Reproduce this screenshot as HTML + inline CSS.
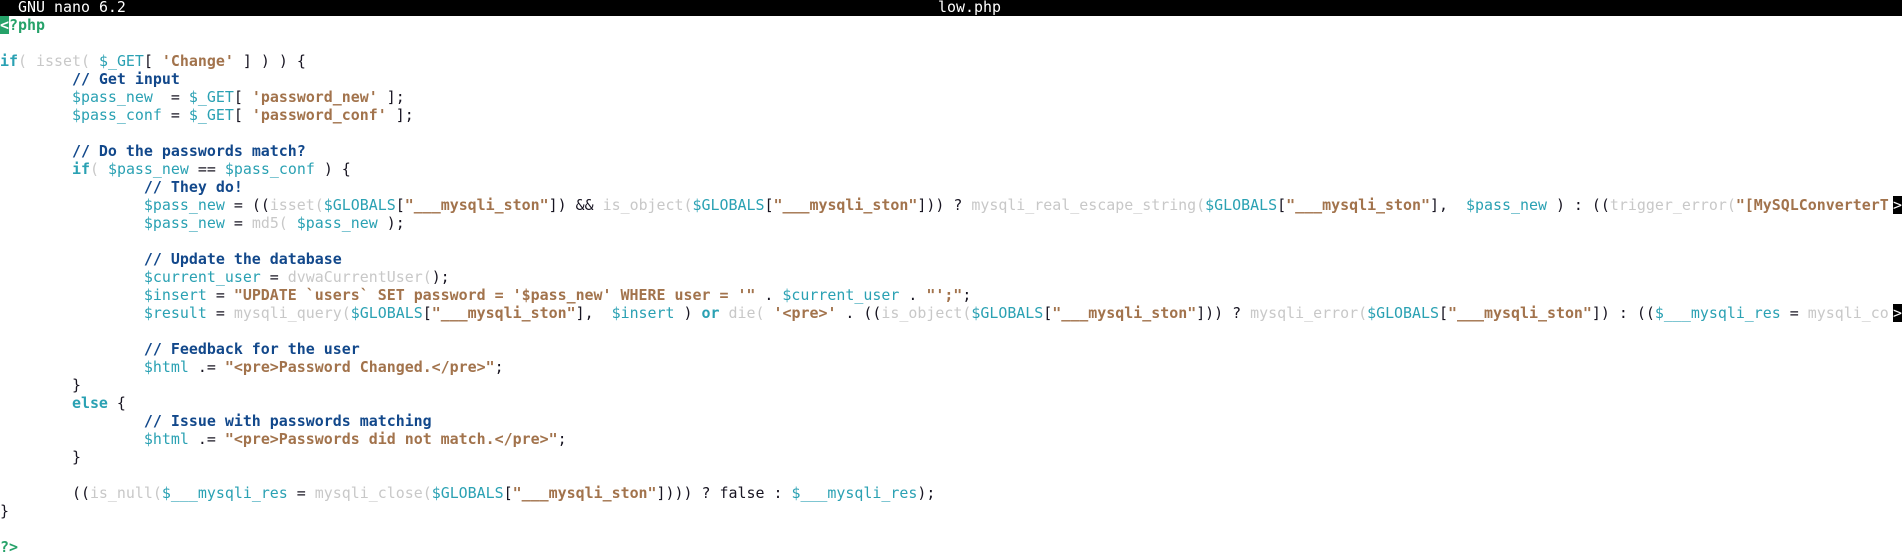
<!DOCTYPE html>
<html><head><meta charset="utf-8"><style>
html,body{margin:0;padding:0;background:#fff;width:1902px;height:557px;overflow:hidden}
body{font-family:"DejaVu Sans Mono","Liberation Mono",monospace;font-size:14.94px;color:#171421}
#bar{position:absolute;left:0;top:0;width:1902px;height:16px;background:#000;color:#fff;white-space:pre;line-height:14px}
#ed{position:absolute;left:0;top:16px;width:1902px}
.l{height:18px;line-height:18px;white-space:pre;overflow:hidden;position:relative}
.k{color:#2aa1b3;font-weight:bold}
.v{color:#2aa1b3}
.f{color:#c8c8c8}
.s{color:#a2734c;font-weight:bold}
.c{color:#12488b;font-weight:bold}
.g{color:#26a269;font-weight:bold}
.gb{background:#26a269;color:#fff;font-weight:bold}
.m{position:absolute;left:1893px;top:0;background:#000;color:#fff;height:18px;width:9px}
</style></head><body>
<div id="bar"><span style="position:absolute;left:18px">GNU nano 6.2</span><span style="position:absolute;left:938px">low.php</span></div>
<div id="ed">
<div class="l"><span class="gb">&lt;</span><span class="g">?php</span></div>
<div class="l"></div>
<div class="l"><span class="k">if</span><span class="f">( isset( </span><span class="v">$_GET</span>[ <span class="s">'Change'</span> ] ) ) {</div>
<div class="l">        <span class="c">// Get input</span></div>
<div class="l">        <span class="v">$pass_new</span>  = <span class="v">$_GET</span>[ <span class="s">'password_new'</span> ];</div>
<div class="l">        <span class="v">$pass_conf</span> = <span class="v">$_GET</span>[ <span class="s">'password_conf'</span> ];</div>
<div class="l"></div>
<div class="l">        <span class="c">// Do the passwords match?</span></div>
<div class="l">        <span class="k">if</span><span class="f">( </span><span class="v">$pass_new</span> == <span class="v">$pass_conf</span> ) {</div>
<div class="l">                <span class="c">// They do!</span></div>
<div class="l">                <span class="v">$pass_new</span> = ((<span class="f">isset(</span><span class="v">$GLOBALS</span>[<span class="s">"___mysqli_ston"</span>]) &amp;&amp; <span class="f">is_object(</span><span class="v">$GLOBALS</span>[<span class="s">"___mysqli_ston"</span>])) ? <span class="f">mysqli_real_escape_string(</span><span class="v">$GLOBALS</span>[<span class="s">"___mysqli_ston"</span>],  <span class="v">$pass_new</span> ) : ((<span class="f">trigger_error(</span><span class="s">"[MySQLConverterT</span><span class="m">&gt;</span></div>
<div class="l">                <span class="v">$pass_new</span> = <span class="f">md5( </span><span class="v">$pass_new</span> );</div>
<div class="l"></div>
<div class="l">                <span class="c">// Update the database</span></div>
<div class="l">                <span class="v">$current_user</span> = <span class="f">dvwaCurrentUser(</span>);</div>
<div class="l">                <span class="v">$insert</span> = <span class="s">"UPDATE `users` SET password = '$pass_new' WHERE user = '"</span> . <span class="v">$current_user</span> . <span class="s">"';"</span>;</div>
<div class="l">                <span class="v">$result</span> = <span class="f">mysqli_query(</span><span class="v">$GLOBALS</span>[<span class="s">"___mysqli_ston"</span>],  <span class="v">$insert</span> ) <span class="k">or</span> <span class="f">die( </span><span class="s">'&lt;pre&gt;'</span> . ((<span class="f">is_object(</span><span class="v">$GLOBALS</span>[<span class="s">"___mysqli_ston"</span>])) ? <span class="f">mysqli_error(</span><span class="v">$GLOBALS</span>[<span class="s">"___mysqli_ston"</span>]) : ((<span class="v">$___mysqli_res</span> = <span class="f">mysqli_co</span><span class="m">&gt;</span></div>
<div class="l"></div>
<div class="l">                <span class="c">// Feedback for the user</span></div>
<div class="l">                <span class="v">$html</span> .= <span class="s">"&lt;pre&gt;Password Changed.&lt;/pre&gt;"</span>;</div>
<div class="l">        }</div>
<div class="l">        <span class="k">else</span> {</div>
<div class="l">                <span class="c">// Issue with passwords matching</span></div>
<div class="l">                <span class="v">$html</span> .= <span class="s">"&lt;pre&gt;Passwords did not match.&lt;/pre&gt;"</span>;</div>
<div class="l">        }</div>
<div class="l"></div>
<div class="l">        ((<span class="f">is_null(</span><span class="v">$___mysqli_res</span> = <span class="f">mysqli_close(</span><span class="v">$GLOBALS</span>[<span class="s">"___mysqli_ston"</span>]))) ? false : <span class="v">$___mysqli_res</span>);</div>
<div class="l">}</div>
<div class="l"></div>
<div class="l"><span class="g">?&gt;</span></div>
</div>
</body></html>
